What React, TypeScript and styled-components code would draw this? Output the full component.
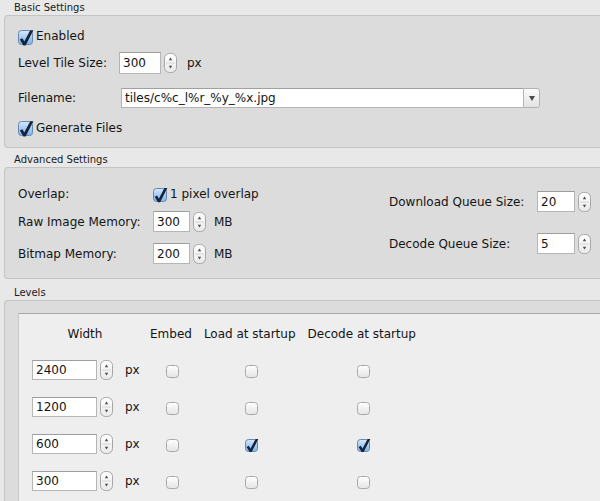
import React, { useId } from "react";
import styled, { createGlobalStyle } from "styled-components";

const Global = createGlobalStyle`
  html, body {
    margin: 0;
    padding: 0;
    background: #e8e8e8;
  }
  body {
    font-family: "DejaVu Sans", "Liberation Sans", sans-serif;
    font-size: 12px;
    color: #141414;
  }
`;

const Window = styled.div`
  height: 501px;
  overflow: hidden;
  display: flex;
  flex-direction: column;
`;

const GroupTitle = styled.div<{ $gap: number }>`
  font-size: 10px;
  height: 15px;
  line-height: 15px;
  padding-left: 14px;
  margin-top: ${({ $gap }) => $gap}px;
  color: #1a1a1a;
`;

const GroupBox = styled.div`
  margin-left: 4px;
  background: #dcdcdc;
  border: 1px solid #c4c4c4;
  border-right: none;
  border-radius: 4px 0 0 4px;
`;

const BasicBox = styled(GroupBox)`
  display: flex;
  flex-direction: column;
  padding: 9px 0 12px 13px;
`;

const Row = styled.div<{ $mt?: number; $h: number }>`
  display: flex;
  align-items: center;
  height: ${({ $h }) => $h}px;
  margin-top: ${({ $mt }) => $mt ?? 0}px;
`;

const Label = styled.div<{ $w?: number }>`
  width: ${({ $w }) => ($w ? `${$w}px` : "auto")};
  flex-shrink: 0;
  white-space: nowrap;
`;

const CheckLabel = styled.label`
  display: flex;
  align-items: center;
  gap: 1px;
  white-space: nowrap;
  font-size: 12px;
`;

const TextField = styled.input<{ $w: number; $h?: number }>`
  box-sizing: border-box;
  width: ${({ $w }) => $w}px;
  height: ${({ $h }) => $h ?? 21}px;
  margin: 0;
  padding: 0 0 0 3px;
  border: 1px solid #b6b6b6;
  border-top-color: #9e9e9e;
  background: #fff;
  font-family: "DejaVu Sans", "Liberation Sans", sans-serif;
  font-size: 12px;
  color: #141414;
  outline: none;
`;

const NumberWrap = styled.div`
  display: flex;
  align-items: center;
  gap: 3px;
`;

const Unit = styled.span<{ $ml: number }>`
  margin-left: ${({ $ml }) => $ml}px;
`;

const Combo = styled.div`
  display: flex;
  width: 419px;
  height: 20px;
`;

const ComboField = styled.div`
  flex: 1;
  box-sizing: border-box;
  background: #fff;
  border: 1px solid #b3b3b3;
  border-top-color: #a0a0a0;
  border-right: none;
  padding-left: 3px;
  line-height: 18px;
`;

const ComboButton = styled.div`
  width: 17px;
  box-sizing: border-box;
  border: 1px solid #b3b3b3;
  border-radius: 0 3px 3px 0;
  background: linear-gradient(#fbfbfb, #e3e3e3);
  display: flex;
  align-items: center;
  justify-content: center;
`;

const ComboArrow = styled.div`
  width: 0;
  height: 0;
  border-left: 3px solid transparent;
  border-right: 3px solid transparent;
  border-top: 5px solid #4a4a4a;
`;

const AdvancedBox = styled(GroupBox)`
  display: flex;
  justify-content: space-between;
  padding: 15px 9px 14px 13px;
`;

const LeftGrid = styled.div`
  display: grid;
  grid-template-columns: 135px auto;
  grid-template-rows: 28px 32px 21px;
  align-items: start;
`;

const RightGrid = styled.div`
  display: grid;
  grid-template-columns: 148px auto;
  grid-auto-rows: 21px;
  row-gap: 21px;
  margin-top: 8px;
  align-items: center;
`;

const Cell = styled.div`
  height: 21px;
  display: flex;
  align-items: center;
  white-space: nowrap;
`;

const LevelsBox = styled(GroupBox)`
  flex: 1;
  display: flex;
  flex-direction: column;
  padding: 12px 0 0 13px;
  border-bottom: none;
  border-radius: 4px 0 0 0;
`;

const LevelsPanel = styled.div`
  flex: 1;
  background: #eeeeee;
  border-top: 1px solid #a9a9a9;
  border-left: 1px solid #c8c8c8;
  padding: 11px 0 0 13px;
`;

const LevelsGrid = styled.div`
  display: grid;
  grid-template-columns: 106px auto auto auto;
  grid-template-rows: 18px;
  grid-auto-rows: 20px;
  column-gap: 12px;
  row-gap: 17px;
  justify-content: start;
  align-items: center;
`;

const HeadCell = styled.div`
  text-align: center;
  white-space: nowrap;
`;

const WidthCell = styled.div`
  display: flex;
  align-items: center;
`;

const BoxCell = styled.div`
  display: flex;
  justify-content: center;
  padding-left: 6px;
`;

const Spinner: React.FC = () => {
  const id = useId();
  return (
    <svg width={13} height={20} viewBox="0 0 13 20">
      <defs>
        <linearGradient id={id} x1="0" y1="0" x2="0" y2="1">
          <stop offset="0" stopColor="#ffffff" />
          <stop offset="1" stopColor="#e9e9e9" />
        </linearGradient>
      </defs>
      <rect x={0.5} y={0.5} width={12} height={19} rx={5} fill={`url(#${id})`} stroke="#a6a6a6" />
      <line x1={2} y1={10} x2={11} y2={10} stroke="#d6d6d6" />
      <path d="M4.8 7.2 L6.5 4.4 L8.2 7.2 Z" fill="#4d4d4d" />
      <path d="M4.8 12.8 L6.5 15.6 L8.2 12.8 Z" fill="#4d4d4d" />
    </svg>
  );
};

// check glyph drawn for a 15px box, scaled for other sizes
const checkPoints: [number, number][] = [
  [1.8, 9.6],
  [4.4, 8.2],
  [6.3, 11.6],
  [12.2, 0.2],
  [15.4, 0.2],
  [7.6, 15.4],
  [5.4, 15.4],
];

const Checkbox: React.FC<{ checked?: boolean; size: number }> = ({ checked, size }) => {
  const id = useId();
  const s = size;
  const k = s / 15;
  const pts = checkPoints.map(([x, y]) => `${(x * k).toFixed(2)},${(y * k + 2 * k).toFixed(2)}`).join(" ");
  return (
    <svg width={s + 2} height={s + 2} viewBox={`0 0 ${s + 2} ${s + 2}`} style={{ overflow: "visible" }}>
      <defs>
        <linearGradient id={id} x1="0" y1="0" x2="0" y2="1">
          {checked ? (
            <>
              <stop offset="0" stopColor="#d6e9fc" />
              <stop offset="0.5" stopColor="#a6cdf4" />
              <stop offset="1" stopColor="#7fb5ec" />
            </>
          ) : (
            <>
              <stop offset="0" stopColor="#ffffff" />
              <stop offset="1" stopColor="#e4e4e4" />
            </>
          )}
        </linearGradient>
      </defs>
      <rect
        x={0.5}
        y={2.5}
        width={s - 1}
        height={s - 1}
        rx={3}
        fill={`url(#${id})`}
        stroke={checked ? "#6488b3" : "#a9a9a9"}
      />
      {checked && <polygon points={pts} fill="#16233b" />}
    </svg>
  );
};

const NumberField: React.FC<{ value: string; w: number; h?: number }> = ({ value, w, h }) => (
  <NumberWrap>
    <TextField $w={w} $h={h} defaultValue={value} />
    <Spinner />
  </NumberWrap>
);

const levels = [
  { width: "2400", load: false, decode: false },
  { width: "1200", load: false, decode: false },
  { width: "600", load: true, decode: true },
  { width: "300", load: false, decode: false },
];

export default function App() {
  return (
    <>
      <Global />
      <Window>
        <GroupTitle $gap={0}>Basic Settings</GroupTitle>
        <BasicBox>
          <Row $h={22}>
            <CheckLabel>
              <Checkbox checked size={15} />
              Enabled
            </CheckLabel>
          </Row>
          <Row $h={22} $mt={5}>
            <Label $w={101}>Level Tile Size:</Label>
            <NumberField value="300" w={42} h={22} />
            <Unit $ml={10}>px</Unit>
          </Row>
          <Row $h={20} $mt={14}>
            <Label $w={103}>Filename:</Label>
            <Combo>
              <ComboField>tiles/c%c_l%r_%y_%x.jpg</ComboField>
              <ComboButton>
                <ComboArrow />
              </ComboButton>
            </Combo>
          </Row>
          <Row $h={15} $mt={12}>
            <CheckLabel>
              <Checkbox checked size={15} />
              Generate Files
            </CheckLabel>
          </Row>
        </BasicBox>

        <GroupTitle $gap={4}>Advanced Settings</GroupTitle>
        <AdvancedBox>
          <LeftGrid>
            <Cell>Overlap:</Cell>
            <Cell>
              <CheckLabel>
                <Checkbox checked size={14} />
                1 pixel overlap
              </CheckLabel>
            </Cell>
            <Cell>Raw Image Memory:</Cell>
            <Cell>
              <NumberField value="300" w={37} />
              <Unit $ml={8}>MB</Unit>
            </Cell>
            <Cell>Bitmap Memory:</Cell>
            <Cell>
              <NumberField value="200" w={37} />
              <Unit $ml={8}>MB</Unit>
            </Cell>
          </LeftGrid>
          <RightGrid>
            <Cell>Download Queue Size:</Cell>
            <Cell>
              <NumberField value="20" w={38} />
            </Cell>
            <Cell>Decode Queue Size:</Cell>
            <Cell>
              <NumberField value="5" w={38} />
            </Cell>
          </RightGrid>
        </AdvancedBox>

        <GroupTitle $gap={6}>Levels</GroupTitle>
        <LevelsBox>
          <LevelsPanel>
            <LevelsGrid>
              <HeadCell>Width</HeadCell>
              <HeadCell>Embed</HeadCell>
              <HeadCell>Load at startup</HeadCell>
              <HeadCell>Decode at startup</HeadCell>
              {levels.map((l) => (
                <React.Fragment key={l.width}>
                  <WidthCell>
                    <NumberField value={l.width} w={65} h={20} />
                    <Unit $ml={12}>px</Unit>
                  </WidthCell>
                  <BoxCell>
                    <Checkbox size={13} />
                  </BoxCell>
                  <BoxCell>
                    <Checkbox checked={l.load} size={13} />
                  </BoxCell>
                  <BoxCell>
                    <Checkbox checked={l.decode} size={13} />
                  </BoxCell>
                </React.Fragment>
              ))}
            </LevelsGrid>
          </LevelsPanel>
        </LevelsBox>
      </Window>
    </>
  );
}
